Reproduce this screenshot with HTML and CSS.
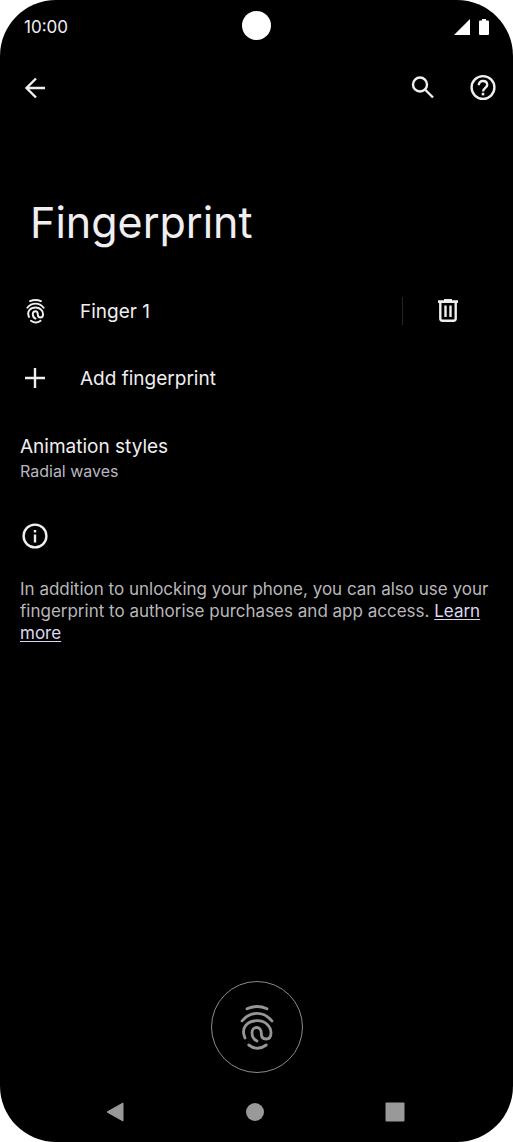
FILE: index.html
```html
<!DOCTYPE html>
<html lang="en-GB">
<head>
<meta charset="utf-8">
<meta name="viewport" content="width=device-width, initial-scale=1">
<title>Fingerprint</title>
<link rel="stylesheet" href="styles.css">
</head>
<body>
<svg class="defs" aria-hidden="true">
  <symbol id="finger" viewBox="-1 -1 34 48">
    <path d="M6 4.8Q16 .2 26 4.8M1 17C5 12 10 9.4 16 9.4S27 12 31 17M4 34C-.5 24 6 16.7 16.3 16.7C24 16.7 30 22 30 29C30 33 28 35 25 35C22 35 20.3 33 20.3 29.5C20.3 26 18.500 23.500 15.700 23.500C13 23.500 11 25.500 11 28.500C11 32 12.500 35.500 16 37M7.700 41Q16.500 47.500 25.300 41" fill="none" stroke="currentColor" stroke-linecap="round" stroke-linejoin="round"/>
  </symbol>
</svg>
<div class="phone">
  <header class="status">
    <time>10:00</time>
    <span class="camera"></span>
    <span class="signals">
      <svg width="16" height="16" viewBox="0 0 16 16"><path d="M16 0V16H0z" fill="currentColor"/></svg>
      <svg width="10" height="16" viewBox="0 0 10 16"><path d="M3 0H7V1.500H9Q10 1.500 10 2.500V15Q10 16 9 16H1Q0 16 0 15V2.500Q0 1.500 1 1.500H3z" fill="currentColor"/></svg>
    </span>
  </header>
  <nav class="toolbar">
    <button class="icon" aria-label="Back"><svg width="30" height="30" viewBox="0 0 30 30"><path d="M25 15H7M16 5.500L6.500 15L16 24.500" class="line"/></svg></button>
    <span class="tools">
      <button class="icon" aria-label="Search"><svg width="30" height="30" viewBox="0 0 30 30"><circle cx="12" cy="11.500" r="7" class="line"/><path d="M17 16.500L25 24.500" class="line"/></svg></button>
      <button class="icon" aria-label="Help"><svg width="30" height="30" viewBox="0 0 30 30"><circle cx="15" cy="14.500" r="11.400" class="line"/><path d="M10.800 12.200C10.800 9.500 12.500 8 15 8S19.200 9.700 19.200 12C19.200 14.700 15 15.200 15 18.500" class="line"/><path d="M13.700 19.800h2.600v2.600h-2.600z" fill="currentColor"/></svg></button>
    </span>
  </nav>
  <main>
    <h1>Fingerprint</h1>
    <div class="row">
      <button class="item"><span class="lead"><svg class="finger-small" width="19" height="26"><use href="#finger"/></svg></span><span class="label">Finger 1</span></button>
      <button class="delete" aria-label="Delete Finger 1"><svg width="20" height="24" viewBox="0 0 20 24"><path d="M6 0H14V1.200H20V4H0V1.200H6z" fill="currentColor"/><path d="M2.300 3V19.500Q2.300 21.700 4.500 21.700H15.500Q17.700 21.700 17.700 19.500V3M7.500 6.500V18M12.500 6.500V18" fill="none" stroke="currentColor" stroke-width="2.400"/></svg></button>
    </div>
    <div class="row">
      <button class="item"><span class="lead"><svg width="30" height="30" viewBox="0 0 30 30"><path d="M15 5V25M5 15H25" class="line"/></svg></span><span class="label">Add fingerprint</span></button>
    </div>
    <button class="setting"><span>Animation styles</span><small>Radial waves</small></button>
    <section class="info">
      <svg width="30" height="30" viewBox="0 0 30 30"><circle cx="15" cy="15" r="11.400" class="line"/><path d="M13.800 9h2.400v2.400h-2.400zM13.800 13.500h2.400v8h-2.400z" fill="currentColor"/></svg>
      <p>In addition to unlocking your phone, you can also use your fingerprint to authorise purchases and app access. <a href="#">Learn more</a></p>
    </section>
  </main>
  <div class="sensor"><svg class="finger-large" width="34" height="48"><use href="#finger"/></svg></div>
  <nav class="system">
    <button class="icon" aria-label="System back"><svg width="20" height="20" viewBox="0 0 20 20"><path d="M18 1V19L2 10z" class="solid"/></svg></button>
    <button class="icon" aria-label="Home"><svg width="20" height="20" viewBox="0 0 20 20"><circle cx="10" cy="10" r="9" fill="currentColor"/></svg></button>
    <button class="icon" aria-label="Recent apps"><svg width="20" height="20" viewBox="0 0 20 20"><rect x=".5" y=".5" width="19" height="19" rx="1" fill="currentColor"/></svg></button>
  </nav>
</div>
</body>
</html>
```

FILE: styles.css
```css
* { box-sizing: border-box; }
body { margin: 0; background: #fff; }
button { border: 0; padding: 0; background: none; color: inherit; font: inherit; text-align: left; cursor: pointer; }
svg { display: block; flex: none; }
.defs { display: none; }
.line { fill: none; stroke: currentColor; stroke-width: 2.4; }
.solid { fill: currentColor; stroke: currentColor; stroke-width: 1; stroke-linejoin: round; }
.finger-small { stroke-width: 3.6; }
.finger-large { stroke-width: 2.8; }

.phone {
  display: flex;
  flex-direction: column;
  min-height: 100vh;
  border-radius: 56px;
  background: #000;
  color: #f0eef1;
  font-family: Inter, "Open Sans", sans-serif;
  font-size: 19px;
}
.status {
  display: grid;
  grid-template-columns: 1fr auto 1fr;
  align-items: center;
  height: 52px;
  padding: 2px 24px 0;
  font-size: 17px;
}
.camera { width: 29px; height: 29px; margin-bottom: 4px; border-radius: 50%; background: #fff; }
.signals { display: flex; justify-content: flex-end; gap: 9px; color: #fff; }
.toolbar { display: flex; justify-content: space-between; padding: 21px 15px 0 20px; }
.tools { display: flex; gap: 30px; }

main { flex: 1; }
h1 { margin: 92px 30px 0; font-size: 43px; line-height: 54px; font-weight: 400; }
.row { display: flex; align-items: center; height: 67px; }
h1 + .row { margin-top: 28px; }
.item { display: flex; align-items: center; flex: 1; height: 100%; padding-left: 20px; }
.lead { display: flex; justify-content: center; width: 30px; margin-right: 30px; }
.label { padding-top: 2px; }
.delete { height: 28px; padding: 0 55px 0 35px; border-left: 1px solid #242424; }
.setting { display: flex; flex-direction: column; width: 100%; padding: 23px 20px 0; line-height: 25px; }
.setting small { color: #b9b7c0; font-size: 16px; line-height: 24px; }
.info { padding: 38px 20px 0; }
.info p { margin: 27px 0 0; color: #b9b7bb; font-size: 17px; line-height: 22px; }
.info a { color: #dcd8f0; text-underline-offset: 2px; }

.sensor {
  display: flex;
  align-items: center;
  justify-content: center;
  align-self: center;
  width: 92px;
  height: 92px;
  border: 1px solid #8c8c8c;
  border-radius: 50%;
  color: #969696;
}
.system { display: flex; justify-content: space-between; align-items: center; height: 69px; padding: 9px 21% 0 20.5%; color: #999; }
.system .icon { flex: none; }
```
